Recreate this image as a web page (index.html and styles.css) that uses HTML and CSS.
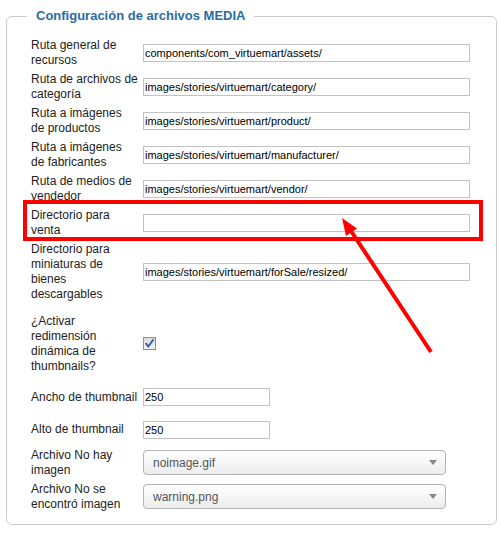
FILE: index.html
```html
<!DOCTYPE html>
<html lang="es">
<head>
<meta charset="utf-8">
<title>Configuración de archivos MEDIA</title>
<link rel="stylesheet" href="styles.css">
</head>
<body>
<div class="page">
  <fieldset class="panel">
    <legend class="panel-title">Configuración de archivos MEDIA</legend>
    <div class="form-grid">
      <label class="field-label">Ruta general de recursos</label>
      <div class="field"><input class="text-input" type="text" value="components/com_virtuemart/assets/"></div>

      <label class="field-label">Ruta de archivos de categoría</label>
      <div class="field"><input class="text-input" type="text" value="images/stories/virtuemart/category/"></div>

      <label class="field-label">Ruta a imágenes de productos</label>
      <div class="field"><input class="text-input" type="text" value="images/stories/virtuemart/product/"></div>

      <label class="field-label">Ruta a imágenes de fabricantes</label>
      <div class="field"><input class="text-input" type="text" value="images/stories/virtuemart/manufacturer/"></div>

      <label class="field-label">Ruta de medios de vendedor</label>
      <div class="field"><input class="text-input" type="text" value="images/stories/virtuemart/vendor/"></div>

      <label class="field-label">Directorio para venta</label>
      <div class="field"><input class="text-input" type="text" value=""></div>

      <label class="field-label">Directorio para miniaturas de bienes descargables</label>
      <div class="field"><input class="text-input" type="text" value="images/stories/virtuemart/forSale/resized/"></div>

      <label class="field-label">¿Activar redimensión dinámica de thumbnails?</label>
      <div class="field">
        <span class="checkbox">
          <svg width="9" height="9" viewBox="0 0 9 9"><path d="M1.2 4.6 L3.4 7.6 L8 1" fill="none" stroke="#2b58b0" stroke-width="1.8" stroke-linejoin="round" stroke-linecap="round"/></svg>
        </span>
      </div>

      <label class="field-label">Ancho de thumbnail</label>
      <div class="field"><input class="text-input text-input--short" type="text" value="250"></div>

      <label class="field-label">Alto de thumbnail</label>
      <div class="field"><input class="text-input text-input--short" type="text" value="250"></div>

      <label class="field-label">Archivo No hay imagen</label>
      <div class="field"><div class="select"><span class="select-value">noimage.gif</span><span class="select-arrow"></span></div></div>

      <label class="field-label">Archivo No se encontró imagen</label>
      <div class="field"><div class="select"><span class="select-value">warning.png</span><span class="select-arrow"></span></div></div>
    </div>
  </fieldset>

  <div class="highlight"></div>
  <svg class="annotation-arrow" width="501" height="534" viewBox="0 0 501 534">
    <line x1="431" y1="352" x2="351" y2="231" stroke="#ff0000" stroke-width="4"/>
    <polygon points="342,218 357,228.6 346,236" fill="#ff0000"/>
  </svg>
</div>
</body>
</html>
```
FILE: styles.css
```css
html, body {
  margin: 0;
  padding: 0;
  background: #ffffff;
}

.page {
  position: relative;
  width: 501px;
  height: 534px;
  padding: 8px 0 0 6px;
  box-sizing: border-box;
  font-family: "Liberation Sans", Arial, sans-serif;
}

.panel {
  width: 491px;
  box-sizing: border-box;
  margin: 0;
  padding: 12px 10px 8px 24px;
  border: 1px solid #cccccc;
  border-radius: 6px;
}

.panel-title {
  margin-left: -4px;
  padding: 0 9px;
  font-size: 13px;
  line-height: 16px;
  font-weight: bold;
  color: #2b6ca3;
}

.form-grid {
  display: grid;
  grid-template-columns: 112px 1fr;
  grid-template-rows: repeat(6, 34px) 64px 79px 28px 37px 29px 39px;
  align-items: center;
}

.field-label {
  width: 107px;
  font-size: 12px;
  line-height: 15px;
  color: #222222;
}

.field {
  display: flex;
  align-items: center;
}

.text-input {
  width: 327px;
  height: 18px;
  box-sizing: border-box;
  margin: 0;
  padding: 0 1px;
  border: 1px solid #c3c3c3;
  border-radius: 0;
  font-family: "Liberation Sans", Arial, sans-serif;
  font-size: 11px;
  color: #000000;
  background: #ffffff;
  outline: none;
}

.text-input--short {
  width: 127px;
}

.checkbox {
  width: 13px;
  height: 13px;
  box-sizing: border-box;
  border: 1px solid #8e8f8f;
  background: linear-gradient(#dcdcdc, #f4f4f4);
  display: flex;
  align-items: center;
  justify-content: center;
}

.select {
  width: 303px;
  height: 25px;
  box-sizing: border-box;
  border: 1px solid #b4b4b4;
  border-radius: 4px;
  background: linear-gradient(#ffffff, #ececec);
  box-shadow: inset 0 1px 0 #ffffff;
  display: flex;
  align-items: center;
  justify-content: space-between;
  padding: 0 8px 0 9px;
}

.select-value {
  font-size: 12px;
  color: #555555;
}

.select-arrow {
  width: 0;
  height: 0;
  border-left: 4px solid transparent;
  border-right: 4px solid transparent;
  border-top: 5px solid #888888;
}

.highlight {
  position: absolute;
  left: 23px;
  top: 200px;
  width: 460px;
  height: 41px;
  box-sizing: border-box;
  border: 4px solid #ff0000;
}

.annotation-arrow {
  position: absolute;
  left: 0;
  top: 0;
  pointer-events: none;
}
```
